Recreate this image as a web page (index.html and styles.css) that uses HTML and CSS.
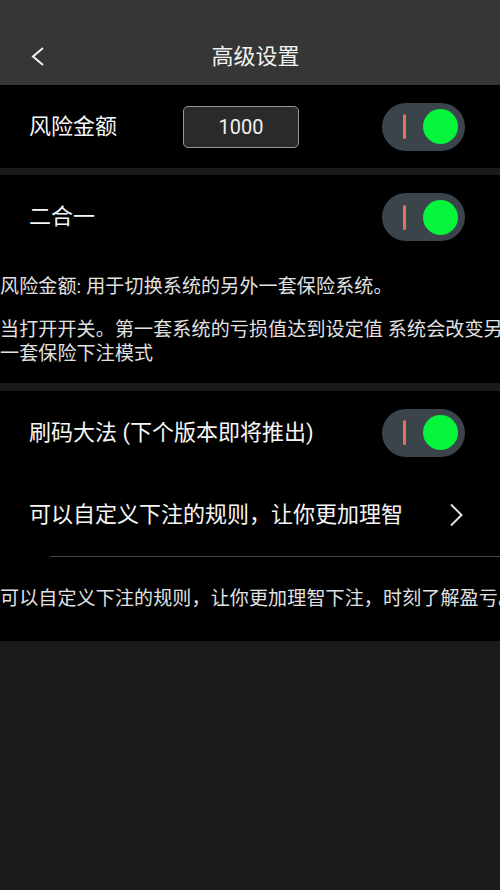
FILE: index.html
```html
<!DOCTYPE html>
<html lang="zh-CN">
<head>
<meta charset="utf-8">
<title>高级设置</title>
<link rel="stylesheet" href="styles.css">
</head>
<body>
<header class="appbar">
  <div class="toolbar">
    <div class="back">
      <svg width="14" height="22" viewBox="0 0 14 22"><path d="M12 2 L2 10.5 L12 19" fill="none" stroke="#f2f2f2" stroke-width="2"/></svg>
    </div>
    <h1 class="title">高级设置</h1>
    <div class="spacer"></div>
  </div>
</header>
<main class="content">
  <section class="card card-risk">
    <div class="row row-risk">
      <span class="label label-fixed">风险金额</span>
      <div class="amount">1000</div>
      <div class="switch"><span class="bar"></span><span class="knob"></span></div>
    </div>
  </section>
  <section class="card card-combo">
    <div class="row">
      <span class="label">二合一</span>
      <div class="switch"><span class="bar"></span><span class="knob"></span></div>
    </div>
    <p class="note note-first">风险金额: 用于切换系统的另外一套保险系统。</p>
    <p class="note note-second">当打开开关。第一套系统的亏损值达到设定值 系统会改变另<br>一套保险下注模式</p>
  </section>
  <section class="card card-brush">
    <div class="row row-short">
      <span class="label">刷码大法 (下个版本即将推出)</span>
      <div class="switch"><span class="bar"></span><span class="knob"></span></div>
    </div>
    <div class="row row-link">
      <span class="label">可以自定义下注的规则，让你更加理智</span>
      <svg class="chev" width="14" height="24" viewBox="0 0 14 24"><path d="M2 1.5 L12.5 12 L2 22.5" fill="none" stroke="#e0e0e0" stroke-width="2"/></svg>
    </div>
    <div class="divider"></div>
    <p class="note note-last">可以自定义下注的规则，让你更加理智下注，时刻了解盈亏。</p>
  </section>
</main>
</body>
</html>
```
FILE: styles.css
```css
* { box-sizing: border-box; }
html, body {
  margin: 0;
  padding: 0;
}
body {
  width: 500px;
  min-height: 890px;
  background: #1a1a1a;
  font-family: Roboto, "Noto Sans CJK SC", sans-serif;
  color: #f4f4f4;
  overflow: hidden;
}
.appbar {
  height: 85px;
  padding-top: 28px;
  background: #363636;
}
.toolbar {
  height: 57px;
  display: grid;
  grid-template-columns: 1fr auto 1fr;
  align-items: center;
}
.back {
  padding-left: 31px;
  display: flex;
  align-items: center;
}
.back svg { display: block; }
.title {
  margin: 0 0 0 11px;
  font-size: 22px;
  font-weight: 400;
  line-height: 30px;
  color: #f2f2f2;
}
.card {
  background: #000;
}
.card-combo { margin-top: 7px; padding-bottom: 17px; }
.card-brush { margin-top: 8px; padding-bottom: 30px; }
.row {
  height: 84px;
  display: flex;
  align-items: center;
  padding: 0 35px 0 29px;
}
.row-risk { height: 83px; }
.row-short { height: 83px; }
.row-link { height: 82px; padding-right: 37px; }
.label {
  font-size: 22px;
  line-height: 30px;
  color: #f6f6f6;
  white-space: nowrap;
}
.label-fixed { width: 154px; flex: none; }
.amount {
  width: 116px;
  height: 42px;
  border: 1px solid #959595;
  border-radius: 5px;
  background: #2a2a2a;
  display: flex;
  align-items: center;
  justify-content: center;
  font-size: 20px;
  color: #f0f0f0;
}
.switch {
  margin-left: auto;
  width: 83px;
  height: 48px;
  border-radius: 24px;
  background: #3b444b;
  display: flex;
  align-items: center;
  padding-left: 21px;
  padding-right: 7px;
  flex: none;
}
.bar {
  width: 3px;
  height: 25px;
  border-radius: 1.5px;
  background: #e5705c;
}
.knob {
  margin-left: auto;
  width: 35px;
  height: 35px;
  border-radius: 50%;
  background: #05f43c;
}
.chev { margin-left: auto; display: block; }
.divider {
  height: 1px;
  margin-left: 50px;
  background: #454545;
}
.note {
  margin: 0;
  font-size: 19px;
  letter-spacing: 0.15px;
  line-height: 24px;
  color: #e2e2e2;
  white-space: nowrap;
  overflow: hidden;
}
.note-first { margin-top: 15.5px; }
.note-second { margin-top: 19.5px; }
.note-last { margin-top: 30px; }
```
